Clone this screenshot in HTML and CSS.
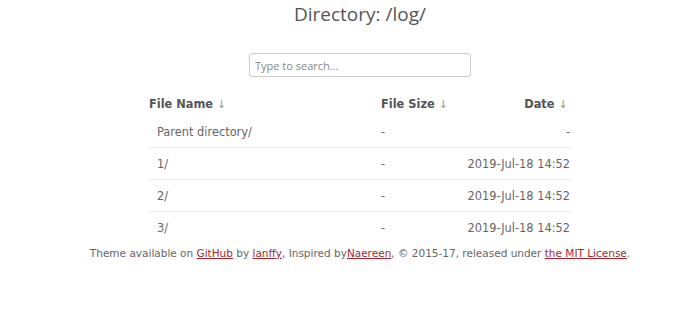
FILE: index.html
```html
<!DOCTYPE html>
<html>
<head>
    <title>Directory: /log/</title>
    <link rel="stylesheet" href="styles.css">
</head>
<body>
    <div class="wrapper">
        <h1>Directory: /log/</h1>

        <div class="search">
            <input type="text" placeholder="Type to search...">
        </div>

        <table class="listing">
            <thead>
                <tr>
                    <th class="name">File Name <span class="arrow">&darr;</span></th>
                    <th class="size">File Size <span class="arrow">&darr;</span></th>
                    <th class="date">Date <span class="arrow">&darr;</span></th>
                </tr>
            </thead>
            <tbody>
                <tr>
                    <td class="name">Parent directory/</td>
                    <td class="size">-</td>
                    <td class="date">-</td>
                </tr>
                <tr>
                    <td class="name">1/</td>
                    <td class="size">-</td>
                    <td class="date">2019-Jul-18 14:52</td>
                </tr>
                <tr>
                    <td class="name">2/</td>
                    <td class="size">-</td>
                    <td class="date">2019-Jul-18 14:52</td>
                </tr>
                <tr>
                    <td class="name">3/</td>
                    <td class="size">-</td>
                    <td class="date">2019-Jul-18 14:52</td>
                </tr>
            </tbody>
        </table>

        <footer>
            Theme available on <a href="#">GitHub</a> by <a href="#">lanffy</a>, Inspired by<a href="#">Naereen</a>, &copy; 2015-17, released under <a href="#">the MIT License</a>.
        </footer>
    </div>
</body>
</html>
```

FILE: styles.css
```css
body {
    margin: 0;
    background: #fff;
    font-family: "DejaVu Sans", Verdana, sans-serif;
    color: #666;
}
.wrapper {
    padding-left: 20px;
    text-align: center;
}
h1 {
    margin: 0;
    padding-top: 1px;
    font-family: "Open Sans", sans-serif;
    font-weight: normal;
    font-size: 19px;
    color: #555;
}
.search {
    margin-top: 26px;
}
.search input {
    width: 222px;
    height: 24px;
    box-sizing: border-box;
    padding: 2px 5px;
    border: 1px solid #ccc;
    border-radius: 3px;
    font-family: "Open Sans", sans-serif;
    font-size: 11px;
    color: #555;
}
.search input::placeholder {
    color: #888;
}
table.listing {
    width: 426px;
    margin: 13px auto 0;
    border-collapse: collapse;
    table-layout: fixed;
    font-size: 11.4px;
}
th {
    height: 24px;
    padding: 2px 2px 0;
    font-weight: bold;
    color: #555;
    text-align: left;
    white-space: nowrap;
}
td {
    height: 31px;
    padding: 0 2px 0 10px;
    text-align: left;
    white-space: nowrap;
    border-bottom: 1px solid #eee;
}
tbody tr:last-child td {
    border-bottom: none;
}
.arrow {
    font-weight: normal;
    color: #999;
}
th.name, td.name {
    width: 228px;
}
th.size, td.size {
    width: 84px;
}
td.size {
    padding-left: 2px;
}
th.date, td.date {
    text-align: right;
    padding-left: 0;
    padding-right: 3px;
}
th.date {
    padding-right: 5px;
}
footer {
    margin-top: 4px;
    font-size: 10.5px;
    color: #666;
}
footer a {
    color: #a3282e;
}
```
